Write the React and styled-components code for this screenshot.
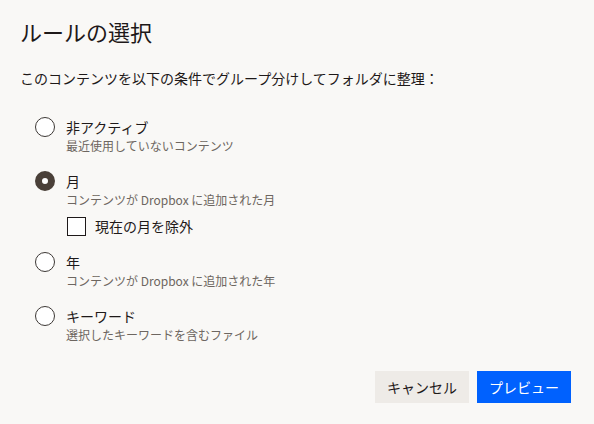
import React, { useState } from 'react'
import styled, { createGlobalStyle } from 'styled-components'

const GlobalStyle = createGlobalStyle`
  html, body {
    margin: 0;
    padding: 0;
    background: #f9f8f6;
  }
  body {
    font-family: "Noto Sans CJK JP", "Noto Sans", sans-serif;
    font-weight: 400;
    color: #1e1919;
  }
`

const Dialog = styled.div`
  width: 594px;
  height: 424px;
  box-sizing: border-box;
  padding: 16px 23px 0 20px;
  display: flex;
  flex-direction: column;
`

const Title = styled.h1`
  margin: 0;
  font-size: 22px;
  line-height: 30px;
  font-weight: 400;
`

const Lead = styled.p`
  margin: 22px 0 0;
  font-size: 14px;
  line-height: 20px;
`

const Options = styled.div`
  margin: 29px 0 0 15px;
  display: flex;
  flex-direction: column;
  gap: 16px;
`

const Option = styled.label`
  display: flex;
  align-items: flex-start;
  gap: 11px;
  cursor: pointer;
`

const Radio = styled.span`
  flex: none;
  box-sizing: border-box;
  width: 20px;
  height: 20px;
  border-radius: 50%;
  border: ${p => (p.$checked ? '7px solid #4a4039' : '1.5px solid #3d3835')};
  background: #fff;
`

const Body = styled.div`
  display: flex;
  flex-direction: column;
`

const Label = styled.span`
  font-size: 14px;
  line-height: 20px;
`

const Hint = styled.span`
  font-size: 12px;
  line-height: 18px;
  color: #6d6660;
`

const CheckRow = styled.label`
  margin: 7px 0 0 1px;
  display: flex;
  align-items: center;
  gap: 9px;
  font-size: 14px;
  line-height: 20px;
`

const Box = styled.span`
  box-sizing: border-box;
  width: 19px;
  height: 19px;
  border: 1.5px solid #1e1919;
  background: #fff;
`

const Footer = styled.div`
  margin-top: 27px;
  display: flex;
  justify-content: flex-end;
  gap: 8px;
`

const Button = styled.button`
  width: 94px;
  height: 32px;
  border: none;
  padding: 0;
  font-family: inherit;
  font-weight: 400;
  font-size: 14px;
  background: ${p => (p.$primary ? '#0061fe' : '#eeebe7')};
  color: ${p => (p.$primary ? '#fff' : '#1e1919')};
  cursor: pointer;
`

const rules = [
  { id: 'inactive', label: '非アクティブ', hint: '最近使用していないコンテンツ' },
  { id: 'month', label: '月', hint: 'コンテンツが Dropbox に追加された月' },
  { id: 'year', label: '年', hint: 'コンテンツが Dropbox に追加された年' },
  { id: 'keyword', label: 'キーワード', hint: '選択したキーワードを含むファイル' },
]

export default function App() {
  const [rule, setRule] = useState('month')

  return (
    <Dialog>
      <GlobalStyle />
      <Title>ルールの選択</Title>
      <Lead>このコンテンツを以下の条件でグループ分けしてフォルダに整理：</Lead>
      <Options>
        {rules.map(r => (
          <Option key={r.id} onClick={() => setRule(r.id)}>
            <Radio $checked={rule === r.id} />
            <Body>
              <Label>{r.label}</Label>
              <Hint>{r.hint}</Hint>
              {r.id === 'month' && (
                <CheckRow>
                  <Box />
                  現在の月を除外
                </CheckRow>
              )}
            </Body>
          </Option>
        ))}
      </Options>
      <Footer>
        <Button>キャンセル</Button>
        <Button $primary>プレビュー</Button>
      </Footer>
    </Dialog>
  )
}
